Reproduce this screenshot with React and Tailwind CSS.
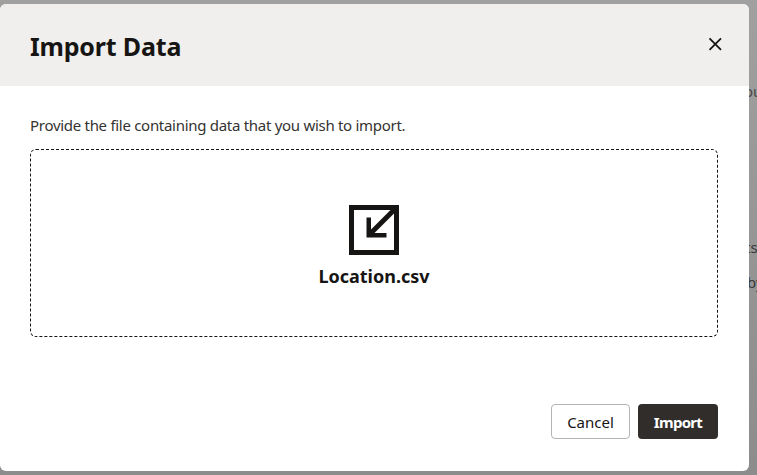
import React from "react";

function CloseIcon() {
  return (
    <svg width="14" height="14" viewBox="0 0 14 14" fill="none" stroke="#161513" strokeWidth="1.8">
      <path d="M1.5 1.3L13 12.8M13 1.3L1.5 12.8" />
    </svg>
  );
}

function ImportIcon() {
  return (
    <svg width="50" height="50" viewBox="0 0 50 50" fill="none" stroke="#161513">
      <rect x="2.5" y="2.5" width="45" height="45" strokeWidth="5" />
      <path d="M20 30L46 4" strokeWidth="5" />
      <path d="M19.75 12.5V30.25H37.5" strokeWidth="4.5" />
    </svg>
  );
}

function Dialog() {
  return (
    <section className="relative flex h-[467px] w-[749px] flex-col overflow-hidden rounded-md bg-white">
      <header className="flex h-[82px] shrink-0 items-center justify-between bg-[#f0efed] pl-[30px] pr-[27px]">
        <h1 className="pt-[2px] text-[25px] leading-8 font-bold tracking-[-0.18px] whitespace-nowrap">Import Data</h1>
        <button aria-label="Close" className="mb-[2px]">
          <CloseIcon />
        </button>
      </header>
      <main className="flex flex-col px-[30px] pr-[31px] pt-[28px]">
        <p className="h-[35px] text-[15px] leading-[22px] tracking-[-0.29px] whitespace-nowrap text-[#343331]">
          Provide the file containing data that you wish to import.
        </p>
        <div className="flex h-[188px] flex-col items-center rounded-md border border-dashed border-[#161513] pt-[55px]">
          <ImportIcon />
          <span className="mt-[7px] text-[18px] leading-7 font-bold">Location.csv</span>
        </div>
      </main>
      <footer className="mt-[67px] flex justify-end gap-2 pr-[31px] text-[15px]">
        <button className="flex h-[35px] w-[79px] items-center justify-center rounded border border-[#b5b4b3] pt-[1px]">
          Cancel
        </button>
        <button className="flex h-[35px] w-20 items-center justify-center rounded bg-[#312d2a] pt-[1px] font-bold tracking-[-0.7px] text-white">
          Import
        </button>
      </footer>
    </section>
  );
}

export default function App() {
  return (
    <div className="relative h-[475px] w-[757px] overflow-hidden bg-[#9b9b9b] bg-linear-to-b from-[#a0a0a0] via-[#969696] to-[#8c8c8c] pt-1 font-['Noto_Sans',sans-serif] text-[#161513]">
      <span className="absolute top-[81px] left-[744px] text-[15px] leading-5 text-[#484848]">ou</span>
      <span className="absolute top-[237px] left-[745px] text-[15px] leading-5 text-[#383838]">ts</span>
      <span className="absolute top-[272px] left-[747px] text-[15px] leading-5 text-[#383838]">by</span>
      <Dialog />
    </div>
  );
}
